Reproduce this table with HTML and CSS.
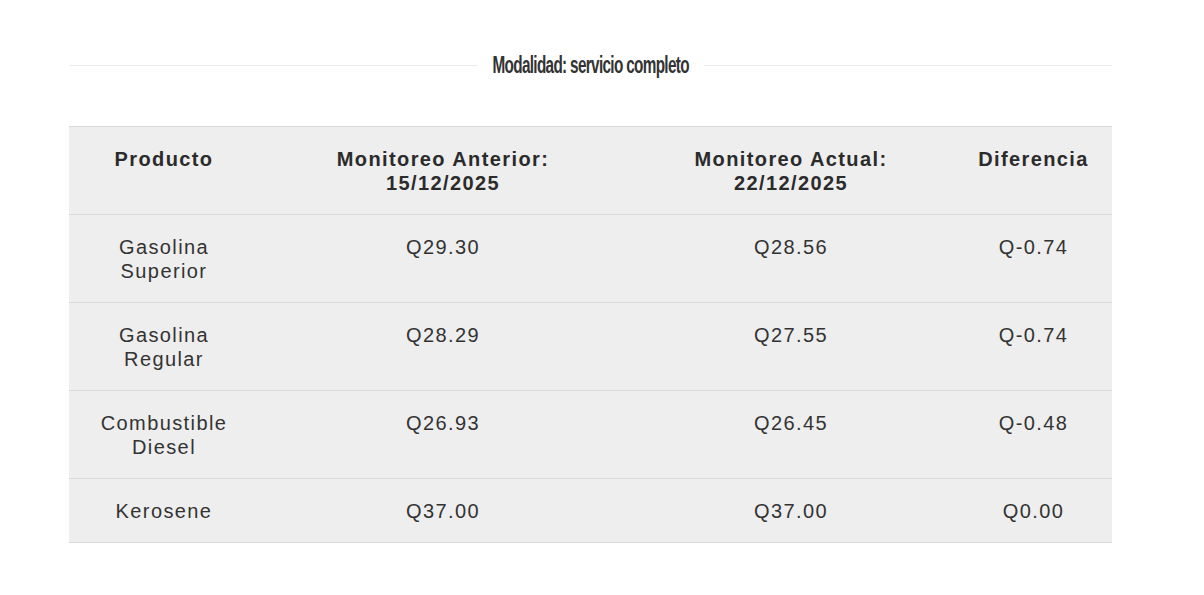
FILE: index.html
```html
<!DOCTYPE html>
<html lang="es">
<head>
<meta charset="utf-8">
<title>Modalidad: servicio completo</title>
<link rel="stylesheet" href="styles.css">
</head>
<body>
<div class="wrap">
  <div class="title-row">
    <span class="rule"></span>
    <h2 class="title"><span class="title-text">Modalidad: servicio completo</span></h2>
    <span class="rule"></span>
  </div>
  <table class="prices">
    <colgroup>
      <col class="c1"><col class="c2"><col class="c3"><col class="c4">
    </colgroup>
    <thead>
      <tr>
        <th>Producto</th>
        <th>Monitoreo Anterior:<br>15/12/2025</th>
        <th>Monitoreo Actual:<br>22/12/2025</th>
        <th>Diferencia</th>
      </tr>
    </thead>
    <tbody>
      <tr><td>Gasolina<br>Superior</td><td>Q29.30</td><td>Q28.56</td><td>Q-0.74</td></tr>
      <tr><td>Gasolina<br>Regular</td><td>Q28.29</td><td>Q27.55</td><td>Q-0.74</td></tr>
      <tr><td>Combustible<br>Diesel</td><td>Q26.93</td><td>Q26.45</td><td>Q-0.48</td></tr>
      <tr><td>Kerosene</td><td>Q37.00</td><td>Q37.00</td><td>Q0.00</td></tr>
    </tbody>
  </table>
</div>
</body>
</html>
```
FILE: styles.css
```css
html, body {
  margin: 0;
  padding: 0;
  background: #fff;
}
body {
  font-family: "Liberation Sans", Arial, sans-serif;
  color: #333;
}
.wrap {
  width: 1043px;
  margin-left: 69px;
  padding-top: 48px;
}
.title-row {
  display: flex;
  align-items: center;
  gap: 16px;
  height: 34px;
}
.rule {
  flex: 1;
  height: 1px;
  background: #ececec;
}
.title {
  margin: 0;
  width: 194px;
  display: flex;
  justify-content: center;
  font-family: "Liberation Sans", Arial, sans-serif;
  font-weight: 700;
  font-size: 23px;
  letter-spacing: -1px;
  color: #333;
  line-height: 34px;
  white-space: nowrap;
}
.title-text {
  display: inline-block;
  transform: scaleX(0.665);
  transform-origin: center;
}
.prices {
  margin-top: 44px;
  width: 1043px;
  border-collapse: collapse;
  background: #eee;
  table-layout: fixed;
}
.c1 { width: 190px; }
.c2 { width: 368px; }
.c3 { width: 328px; }
.c4 { width: 157px; }
.prices th, .prices td {
  border-top: 1px solid #d9d9d9;
  border-bottom: 1px solid #d9d9d9;
  padding: 20px 6px 19px;
  text-align: center;
  vertical-align: top;
  font-size: 20px;
  line-height: 24px;
  letter-spacing: 1.4px;
  color: #333;
}
.prices th {
  font-weight: 700;
  color: #2b2b2b;
}
.prices td {
  font-weight: 400;
}
```
